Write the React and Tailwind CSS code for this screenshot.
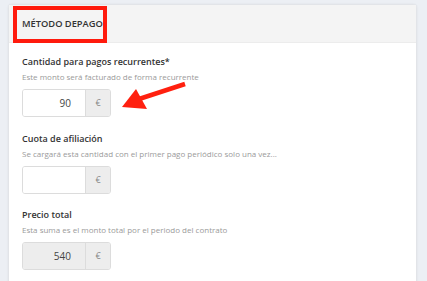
import React from "react";

function Field({ title, subtitle, value, disabled }) {
  return (
    <div className="flex flex-col">
      <div className="text-[9px] leading-[15px] font-semibold text-[#333]">{title}</div>
      <div className="mt-[1px] text-[8px] leading-[14px] text-[#9a9a9a]">{subtitle}</div>
      <div className="mt-[5px] flex h-[28px] w-[89px] overflow-hidden rounded-[3px] border border-[#dcdcdc]">
        <div
          className={
            "flex w-[62px] items-center justify-end pr-[14px] text-[10px] text-[#444] " +
            (disabled ? "bg-[#ededed]" : "bg-white")
          }
        >
          {value}
        </div>
        <div className="flex flex-1 items-center justify-center border-l border-[#dcdcdc] bg-[#ededed] text-[9px] text-[#888]">
          €
        </div>
      </div>
    </div>
  );
}

export default function App() {
  return (
    <div
      className="relative h-[281px] w-[427px] overflow-hidden bg-[#eceff4] pl-[8px] pr-[10px] pt-[4px]"
      style={{ fontFamily: '"Open Sans", "Liberation Sans", sans-serif' }}
    >
      <div className="relative h-[300px] rounded-[4px] border border-[#e2e4e8] bg-white shadow-[0_0_2px_rgba(0,0,0,0.08)]">
        <div className="flex h-[38px] items-center border-b border-[#ececec] bg-[#f4f4f4] px-[13px]">
          <span className="text-[9.3px] font-semibold uppercase text-[#333]">Método depago</span>
        </div>
        <div className="absolute left-[4px] top-[1px] h-[37px] w-[94px] border-[4px] border-[#ff1a0d]" />
        <div className="flex flex-col gap-[13.5px] px-[13px] pt-[11px]">
          <Field
            title="Cantidad para pagos recurrentes*"
            subtitle="Este monto será facturado de forma recurrente"
            value="90"
          />
          <Field
            title="Cuota de afiliación"
            subtitle="Se cargará esta cantidad con el primer pago periódico solo una vez..."
            value=""
          />
          <Field
            title="Precio total"
            subtitle="Esta suma es el monto total por el periodo del contrato"
            value="540"
            disabled
          />
        </div>
      </div>
      <svg
        className="absolute left-0 top-0"
        width="427"
        height="281"
        viewBox="0 0 427 281"
      >
        <line x1="185" y1="84" x2="136" y2="100" stroke="#ff200f" strokeWidth="4.5" strokeLinecap="butt" />
        <polygon points="122,107 136,89 147,109" fill="#ff200f" />
      </svg>
    </div>
  );
}
